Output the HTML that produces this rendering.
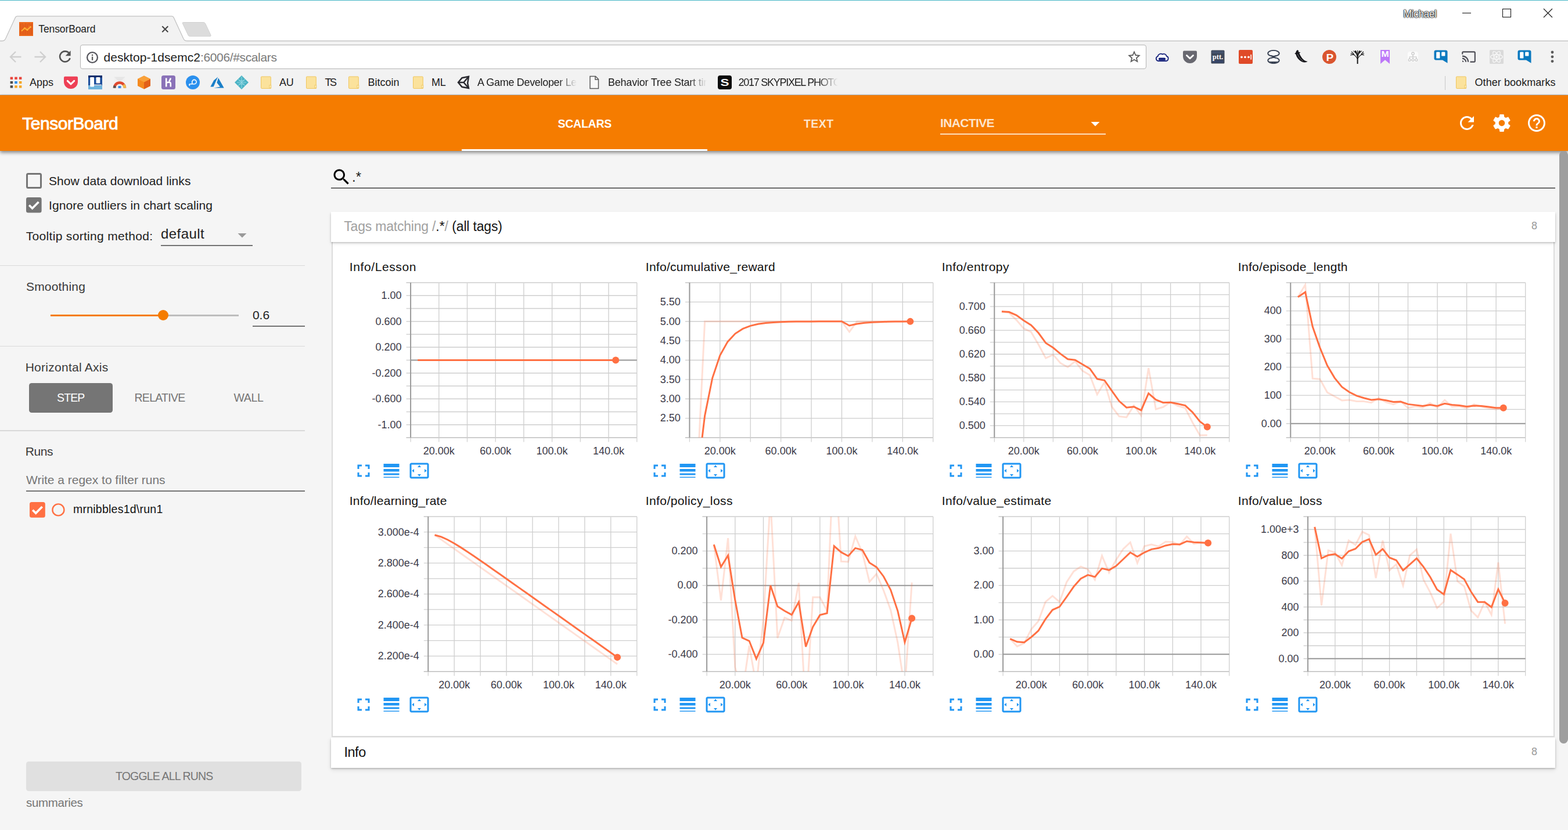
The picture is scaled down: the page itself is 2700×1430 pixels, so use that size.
<!DOCTYPE html>
<html lang="en"><head><meta charset="utf-8"><title>TensorBoard</title>
<style>
html,body{margin:0;padding:0}
body{width:2700px;height:1430px;overflow:hidden;background:#f5f5f5;position:relative;font-family:"Liberation Sans",sans-serif;}
.b{position:absolute;display:block}
.t{position:absolute;white-space:pre;display:block}
</style></head>
<body>
<div id="browser-chrome">
<div class="b" style="left:0.00px;top:0.00px;width:2700.00px;height:70.00px;background:#ffffff;"></div>
<div class="b" style="left:0.00px;top:0.00px;width:2700.00px;height:1.00px;background:#42b4c5;"></div>
<div class="b" style="left:0.00px;top:71.00px;width:2700.00px;height:93.00px;background:#f2f2f2;"></div>
<svg class="b" style="left:0;top:0" width="2700" height="72" viewBox="0 0 2700 72"><line x1="0" y1="70.5" x2="2700" y2="70.5" stroke="#b0b0b0" stroke-width="1.2"/><path d="M0 70.5 L4 70.5 C7.5 70.5 8.5 68.8 10 65.8 L26.2 30.5 C27 28.8 28 27.8 30 27.8 L295.5 27.8 C297.5 27.8 298.5 28.8 299.3 30.5 L315.5 65.8 C317 68.8 318 70.5 321.5 70.5 L326 70.5 L326 72 L0 72 Z" fill="#f2f2f2"/><path d="M0 70.5 L4 70.5 C7.5 70.5 8.5 68.8 10 65.8 L26.2 30.5 C27 28.8 28 27.8 30 27.8 L295.5 27.8 C297.5 27.8 298.5 28.8 299.3 30.5 L315.5 65.8 C317 68.8 318 70.5 321.5 70.5 L326 70.5" fill="none" stroke="#c2c2c2" stroke-width="1.3"/><path d="M315.5 38.5 L350 38.5 C352 38.5 353 39.3 353.8 41 L362.8 60 C363.6 61.8 363 62.6 361 62.6 L327.5 62.6 C325.5 62.6 324.5 61.8 323.7 60 L314.7 41 C313.9 39.3 314.1 38.5 315.5 38.5 Z" fill="#dcdcdc" stroke="#d2d2d2" stroke-width="1"/></svg>
<svg class="b" style="left:33px;top:38px" width="24" height="24" viewBox="0 0 24 24"><rect width="24" height="24" fill="#ec6a1c"/><path d="M2 3v18M5 2v20M8 4v18M11 2v7M11 14v8M14 3v6M14 15v7M17 2v4M17 12v10M20 3v19M22 2v20" stroke="#d9531a" stroke-width="1.2" fill="none"/><path d="M4.5 15 L9.5 10.5 L14 13.5 L19.5 8.5" stroke="#ffb233" stroke-width="1.8" fill="none" stroke-linejoin="round" stroke-linecap="round"/><circle cx="9.5" cy="10.5" r="1.5" fill="#ffb233"/><circle cx="14" cy="13.5" r="1.5" fill="#ffb233"/><circle cx="19.5" cy="8.5" r="1.5" fill="#ffb233"/></svg>
<span class="t" style="left:66.30px;top:41.59px;font-size:17.5px;line-height:17.5px;color:#1e1e1e;letter-spacing:-0.111px;">TensorBoard</span>
<svg class="b" style="left:277px;top:43px" width="15" height="15" viewBox="0 0 15 15"><path d="M2.3 2.3 L12.3 12.3 M12.3 2.3 L2.3 12.3" stroke="#444" stroke-width="2" fill="none"/></svg>
<span class="t" style="left:2416.50px;top:15.69px;font-size:17.5px;line-height:17.5px;color:#fff;letter-spacing:-0.471px;text-shadow:0 0 1px #000,0 0 1px #000,0 0 1.5px #111,0 0 2px #333,0 0 3px #666;">Michael</span>
<svg class="b" style="left:2500px;top:8px" width="190" height="30" viewBox="0 0 190 30"><line x1="18" y1="14.5" x2="33" y2="14.5" stroke="#1a1a1a" stroke-width="1.1"/><rect x="87.5" y="7.5" width="14" height="14" fill="none" stroke="#1a1a1a" stroke-width="1.1"/><path d="M158 7 L173 22 M173 7 L158 22" stroke="#1a1a1a" stroke-width="1.15" fill="none"/></svg>
<svg class="b" style="left:0;top:76px" width="140" height="44" viewBox="0 0 140 44"><path d="M36.5 22 L18.5 22 M27 13 L18 22 L27 31" stroke="#cfcfcf" stroke-width="2.4" fill="none"/><path d="M59.5 22 L77.5 22 M69 13 L78 22 L69 31" stroke="#cfcfcf" stroke-width="2.4" fill="none"/><path d="M118.6 15.2 A9 9 0 1 0 120.6 24.2" stroke="#545454" stroke-width="2.6" fill="none"/><path d="M121.6 11.2 L121.6 20.2 L112.6 20.2 Z" fill="#545454"/></svg>
<div class="b" style="left:137.80px;top:77.20px;width:1836.20px;height:42.10px;background:#ffffff;border:1.3px solid #b3b3b3;border-radius:4px;box-sizing:border-box;"></div>
<svg class="b" style="left:148px;top:87.6px" width="22" height="22" viewBox="0 0 22 22"><circle cx="11" cy="11" r="8.9" fill="none" stroke="#55555c" stroke-width="2.3"/><rect x="9.9" y="9.6" width="2.3" height="6.2" fill="#5a5a5a"/><rect x="9.9" y="5.8" width="2.3" height="2.3" fill="#5a5a5a"/></svg>
<span class="t" style="left:178.50px;top:88.42px;font-size:21px;line-height:21px;color:#1c1c1c;letter-spacing:0.050px;">desktop-1dsemc2</span>
<span class="t" style="left:345.00px;top:88.42px;font-size:21px;line-height:21px;color:#7a7a7a;letter-spacing:-0.362px;">:6006/#scalars</span>
<svg class="b" style="left:1940.00px;top:85.00px;" width="26" height="26" viewBox="0 0 24 24"><path d="M22 9.24l-7.19-.62L12 2 9.19 8.63 2 9.24l5.46 4.73L5.82 21 12 17.27 18.18 21l-1.63-7.03L22 9.24zM12 15.4l-3.76 2.27 1-4.28-3.32-2.88 4.38-.38L12 6.1l1.71 4.04 4.38.38-3.32 2.88 1 4.28L12 15.4z" fill="#5a5a5a"/></svg>
<div id="extensions">
<svg class="b" style="left:1989.0px;top:86.0px" width="24" height="24" viewBox="0 0 24 24"><path d="M5.5 19 H18.5 A4.3 4.3 0 0 0 19.6 10.6 A4.6 4.6 0 0 0 12.6 7.6 A5.2 5.2 0 0 0 4.6 11.2 A4 4 0 0 0 5.5 19 Z" fill="#fff" stroke="#14207a" stroke-width="1.8"/><rect x="6" y="13.6" width="12" height="4.2" rx="1.6" fill="#14207a"/></svg>
<svg class="b" style="left:2037.0px;top:86.0px" width="24" height="24" viewBox="0 0 24 24"><path d="M2 1.5 H22 Q24 1.5 24 3.5 V11 A12 12 0 0 1 0 11 V3.5 Q0 1.5 2 1.5 Z" fill="#686870"/><path d="M6.5 9.5 L12 14.8 L17.5 9.5" stroke="#fff" stroke-width="2.8" fill="none" stroke-linecap="round" stroke-linejoin="round"/></svg>
<svg class="b" style="left:2085.0px;top:86.0px" width="24" height="24" viewBox="0 0 24 24"><rect x="0.5" y="0.5" width="23" height="23" rx="1.5" fill="#3e485a"/><rect x="2" y="2" width="20" height="4" fill="#4a5a78" opacity=".6"/><rect x="3" y="18" width="18" height="4" fill="#33456e" opacity=".7"/><text x="12" y="15.6" font-family="Liberation Serif,serif" font-weight="700" font-size="12.5" fill="#fff" text-anchor="middle">ptt.</text></svg>
<svg class="b" style="left:2132.7px;top:86.0px" width="24" height="24" viewBox="0 0 24 24"><rect x="0" y="0" width="24" height="24" rx="2" fill="#e04a28"/><circle cx="5" cy="12.3" r="1.9" fill="#fff"/><circle cx="11" cy="12.3" r="1.9" fill="#fff"/><circle cx="17" cy="12.3" r="1.9" fill="#fff"/><rect x="20.4" y="8" width="1.6" height="8.6" fill="#fff"/></svg>
<svg class="b" style="left:2181.0px;top:86.0px" width="24" height="24" viewBox="0 0 24 24"><ellipse cx="12" cy="5.9" rx="9.7" ry="5" fill="#fbfbfb" stroke="#363f50" stroke-width="1.9"/><ellipse cx="12" cy="18.1" rx="9.7" ry="5" fill="#fbfbfb" stroke="#363f50" stroke-width="1.9"/><path d="M8 9.8 L16 14.2 M16 9.8 L8 14.2" stroke="#363f50" stroke-width="1.8" fill="none"/><path d="M3.4 19.4 Q12 25 20.6 19.4 Q12 20.6 3.4 19.4Z" fill="#363f50"/></svg>
<svg class="b" style="left:2228.0px;top:86.0px" width="24" height="24" viewBox="0 0 24 24"><path d="M6.2 0 L8.6 2 L7 3 L11.6 4.4 L9.3 5.6 C10.8 9.5 13 13.6 16.6 16.8 C18.6 18.6 20.8 19.6 23.6 19.8 C21.5 22 17 22 13.4 20.2 C8.2 17.5 4.5 12.5 3.3 7.6 L1.2 6.3 L3.3 4.8 C3.3 3 4.4 1.2 6.2 0 Z" fill="#15151a"/><path d="M6.3 7 C8 11.8 10.8 16 15.8 19.2" stroke="#f2f2f2" stroke-width="0.8" fill="none" opacity=".55"/></svg>
<svg class="b" style="left:2277.0px;top:86.0px" width="24" height="24" viewBox="0 0 24 24"><circle cx="12" cy="12" r="12" fill="#da552f"/><text x="0" y="0" font-family="Liberation Sans,sans-serif" font-weight="700" font-size="15.6" fill="#fff" text-anchor="middle" transform="translate(12.9 18.5) scale(1.22 1)">P</text></svg>
<svg class="b" style="left:2325.0px;top:86.0px" width="24" height="24" viewBox="0 0 24 24"><path d="M12.6 24 V12.5" stroke="#111" stroke-width="1.9" fill="none"/><path d="M12.6 15.5 C10 11 7 8 3 6.5 M12.6 15.5 C15 11 18 8 22.5 6.5 M12.6 13 C11.5 8 10 4.5 8 1.5 M12.6 13 C13.8 8 15.5 4.5 17.5 1.5 M12.6 12 V0.8 M8 9 C5.5 8 3 8 0.3 9.3 M17.5 9 C20 8 22 8 24 9.3 M6.5 7.4 C5 5.5 3.8 4 2 3 M19 7.4 C20.5 5.5 21.5 4 23 3 M10.6 6.5 C9 4.5 7.5 3 5.5 1.6 M14.8 6.5 C16.4 4.5 18 3 20 1.6 M4.2 6.9 L0.8 6 M21.3 6.9 L24 6 M11.6 8 L10.3 2.5 M13.7 8 L15 2.5 M9.3 5 L9.5 1 M16 5 L15.8 1" stroke="#111" stroke-width="1.1" fill="none"/></svg>
<svg class="b" style="left:2373.0px;top:86.0px" width="24" height="24" viewBox="0 0 24 24"><path d="M4.1 0 H20 V24 L12 17.3 L4.1 24 Z" fill="#bd78f8"/><text x="0" y="0" font-family="Liberation Sans,sans-serif" font-weight="700" font-size="14.4" fill="#fff" text-anchor="middle" transform="translate(12.05 12.3) scale(1.1 1)">M</text></svg>
<svg class="b" style="left:2421.0px;top:86.0px" width="24" height="24" viewBox="0 0 24 24"><rect x="3" y="3" width="18" height="18" rx="4" fill="#fbfbfb"/><g stroke="#c4c4c4" stroke-width="1.1" fill="none"><circle cx="12" cy="6.3" r="2.2"/><circle cx="6.2" cy="17.3" r="2"/><circle cx="12" cy="17.3" r="2"/><circle cx="17.8" cy="17.3" r="2"/><path d="M12 8.5 V15.3 M6.2 15.3 V12 H17.8 V15.3"/></g></svg>
<svg class="b" style="left:2469.0px;top:86.0px" width="24" height="24" viewBox="0 0 24 24"><path d="M3.5 0.5 H20.5 Q23.5 0.5 23.5 3.5 V22.8 L15 17.5 H3.5 Q0.5 17.5 0.5 14.5 V3.5 Q0.5 0.5 3.5 0.5 Z" fill="#0b79bf"/><rect x="4.2" y="3.6" width="6.2" height="11" rx="1.2" fill="#fff"/><rect x="13.2" y="3.6" width="6.2" height="7" rx="1.2" fill="#fff"/></svg>
<svg class="b" style="left:2517.0px;top:86.0px" width="24" height="24" viewBox="0 0 24 24"><path d="M1.2 7.5 V5 Q1.2 3.4 2.8 3.4 H21.2 Q22.8 3.4 22.8 5 V19 Q22.8 20.6 21.2 20.6 H14.5" fill="none" stroke="#4c4c54" stroke-width="2.1"/><path d="M1 20.8 V18.3 A2.5 2.5 0 0 1 3.5 20.8 Z" fill="#4c4c54"/><path d="M1 14.6 A6.2 6.2 0 0 1 7.2 20.8 M1 10.6 A10.2 10.2 0 0 1 11.2 20.8" fill="none" stroke="#4c4c54" stroke-width="2.1"/></svg>
<svg class="b" style="left:2565.0px;top:86.0px" width="24" height="24" viewBox="0 0 24 24"><rect width="24" height="24" rx="1.5" fill="#dadada"/><g stroke="#f7f7f7" stroke-width="1.3" fill="none"><ellipse cx="12" cy="12" rx="10.5" ry="4"/><ellipse cx="12" cy="12" rx="10.5" ry="4" transform="rotate(60 12 12)"/><ellipse cx="12" cy="12" rx="10.5" ry="4" transform="rotate(120 12 12)"/></g><circle cx="12" cy="12" r="2" fill="#f7f7f7"/></svg>
<svg class="b" style="left:2613.0px;top:86.0px" width="24" height="24" viewBox="0 0 24 24"><path d="M3.5 0.5 H20.5 Q23.5 0.5 23.5 3.5 V22.8 L15 17.5 H3.5 Q0.5 17.5 0.5 14.5 V3.5 Q0.5 0.5 3.5 0.5 Z" fill="#0b79bf"/><rect x="4.2" y="3.6" width="6.2" height="11" rx="1.2" fill="#fff"/><rect x="13.2" y="3.6" width="6.2" height="7" rx="1.2" fill="#fff"/></svg>
<svg class="b" style="left:2667px;top:84px" width="12" height="28" viewBox="0 0 12 28"><circle cx="6" cy="6" r="2.4" fill="#5a5a5a"/><circle cx="6" cy="13.8" r="2.4" fill="#5a5a5a"/><circle cx="6" cy="21.6" r="2.4" fill="#5a5a5a"/></svg>
</div>
<nav id="bookmarks-bar">
<svg class="b" style="left:16.5px;top:131.5px" width="21" height="20" viewBox="0 0 21 20"><rect x="0.6" y="0.6" width="4.6" height="4.3" fill="#e8453c"/><rect x="8.2" y="0.6" width="4.6" height="4.3" fill="#e8453c"/><rect x="15.8" y="0.6" width="4.6" height="4.3" fill="#e8453c"/><rect x="0.6" y="7.9" width="4.6" height="4.3" fill="#4d4d4d"/><rect x="8.2" y="7.9" width="4.6" height="4.3" fill="#2d8fe8"/><rect x="15.8" y="7.9" width="4.6" height="4.3" fill="#f5a623"/><rect x="0.6" y="15.2" width="4.6" height="4.3" fill="#4d4d4d"/><rect x="8.2" y="15.2" width="4.6" height="4.3" fill="#f5a623"/><rect x="15.8" y="15.2" width="4.6" height="4.3" fill="#f5a623"/></svg>
<span class="t" style="left:51.00px;top:133.06px;font-size:18px;line-height:18px;color:#1c1c1c;letter-spacing:-0.006px;">Apps</span>
<svg class="b" style="left:110.0px;top:129.8px" width="24" height="24" viewBox="0 0 24 24"><path d="M2 1.8 H22 Q24 1.8 24 3.8 V11 A12 12 0 0 1 0 11 V3.8 Q0 1.8 2 1.8 Z" fill="#ee4056"/><path d="M6.3 9.3 L12 14.8 L17.7 9.3" stroke="#fff" stroke-width="3" fill="none" stroke-linecap="round" stroke-linejoin="round"/></svg>
<svg class="b" style="left:152.0px;top:129.8px" width="24" height="24" viewBox="0 0 24 24"><rect width="24" height="24" rx="2" fill="#1e4f9c"/><rect x="0" y="17" width="24" height="7" fill="#6fb3dc"/><rect x="0" y="0" width="24" height="4" fill="#16306e"/><rect x="3.2" y="3" width="6.8" height="16.5" rx="1.2" fill="#fff"/><rect x="13.5" y="3" width="6.8" height="10.5" rx="1.2" fill="#fff"/><rect x="10" y="15.5" width="13" height="1.6" fill="#d8d8e0"/></svg>
<svg class="b" style="left:193.6px;top:129.8px" width="24" height="24" viewBox="0 0 24 24"><rect x="2.5" y="2.5" width="19" height="19" fill="#f0f0f0"/><path d="M2.5 2.5 L12 12 L21.5 2.5" fill="#e6e6e6"/><path d="M3 21.5 A9 9 0 0 1 21 21.5" stroke="#e04a2f" stroke-width="4.6" fill="none"/><path d="M18.6 16 A9 9 0 0 1 21 21.5" stroke="#eebb4d" stroke-width="4.6" fill="none"/><path d="M3 21.5 A9 9 0 0 1 4 18" stroke="#555" stroke-width="4.6" fill="none"/><rect x="9.5" y="18" width="5" height="4" fill="#3a8ee6"/></svg>
<svg class="b" style="left:236.0px;top:129.8px" width="24" height="24" viewBox="0 0 24 24"><path d="M12 0.5 L23 6 V18 L12 23.5 L1 18 V6 Z" fill="#f58a1f"/><path d="M12 11.5 L23 6 V18 L12 23.5 Z" fill="#e2601a"/><path d="M12 0.5 L23 6 L12 11.5 L1 6 Z" fill="#f9a13a"/></svg>
<svg class="b" style="left:278.0px;top:129.8px" width="24" height="24" viewBox="0 0 24 24"><rect width="24" height="24" rx="3.5" fill="#8a72b8"/><path d="M8.2 4.5 V19.5 M8.2 13 C11 11 15.8 11 15.8 14 V19.5 M15.8 4.5 C15.5 7 14.5 8.5 13 9.8" stroke="#fff" stroke-width="2.6" fill="none"/></svg>
<svg class="b" style="left:320.0px;top:129.8px" width="24" height="24" viewBox="0 0 24 24"><circle cx="12" cy="12" r="12" fill="#2b90ee"/><path d="M7.2 17.4 C5.4 17.4 5.4 14.8 7.2 14.8 H14.5 A3.7 3.7 0 1 0 10.8 11.1 V14.8" stroke="#fff" stroke-width="1.6" fill="none"/></svg>
<svg class="b" style="left:361.9px;top:129.8px" width="24" height="24" viewBox="0 0 24 24"><path d="M13.2 2.5 L6.2 8.6 L0.3 19.4 H5.6 Z" fill="#1a7fc8"/><path d="M14 4.2 L23.7 21.5 H6.2 L17 19.5 L11.4 12.6 Z" fill="#1a7fc8"/></svg>
<svg class="b" style="left:403.7px;top:129.8px" width="24" height="24" viewBox="0 0 24 24"><path d="M12 0 L24 12 L12 24 L0 12 Z" fill="#4bb3c4"/><path d="M4 12 H20 M12 2 V22 M6 6 L18 18 M18 6 L6 18 M7 9 L17 9 M7 15 L17 15" stroke="#9fdde6" stroke-width="0.9" fill="none"/></svg>
<svg class="b" style="left:445.5px;top:129.8px" width="24" height="24" viewBox="0 0 24 24"><path d="M4.6 2 H19.2 Q20.3 2 20.3 3.1 V22.4 H4.6 Q3.5 22.4 3.5 21.3 V3.1 Q3.5 2 4.6 2 Z" fill="#fbe29c" stroke="#efc65f" stroke-width="1"/><rect x="18" y="16.8" width="2.8" height="4.4" fill="#fdf0c4" stroke="#efc65f" stroke-width="0.9"/></svg>
<span class="t" style="left:481.00px;top:133.06px;font-size:18px;line-height:18px;color:#1c1c1c;letter-spacing:-0.253px;">AU</span>
<svg class="b" style="left:524.0px;top:129.8px" width="24" height="24" viewBox="0 0 24 24"><path d="M4.6 2 H19.2 Q20.3 2 20.3 3.1 V22.4 H4.6 Q3.5 22.4 3.5 21.3 V3.1 Q3.5 2 4.6 2 Z" fill="#fbe29c" stroke="#efc65f" stroke-width="1"/><rect x="18" y="16.8" width="2.8" height="4.4" fill="#fdf0c4" stroke="#efc65f" stroke-width="0.9"/></svg>
<span class="t" style="left:559.50px;top:133.06px;font-size:18px;line-height:18px;color:#1c1c1c;letter-spacing:-2.600px;">TS</span>
<svg class="b" style="left:597.0px;top:129.8px" width="24" height="24" viewBox="0 0 24 24"><path d="M4.6 2 H19.2 Q20.3 2 20.3 3.1 V22.4 H4.6 Q3.5 22.4 3.5 21.3 V3.1 Q3.5 2 4.6 2 Z" fill="#fbe29c" stroke="#efc65f" stroke-width="1"/><rect x="18" y="16.8" width="2.8" height="4.4" fill="#fdf0c4" stroke="#efc65f" stroke-width="0.9"/></svg>
<span class="t" style="left:633.50px;top:133.06px;font-size:18px;line-height:18px;color:#1c1c1c;letter-spacing:-0.004px;">Bitcoin</span>
<svg class="b" style="left:707.5px;top:129.8px" width="24" height="24" viewBox="0 0 24 24"><path d="M4.6 2 H19.2 Q20.3 2 20.3 3.1 V22.4 H4.6 Q3.5 22.4 3.5 21.3 V3.1 Q3.5 2 4.6 2 Z" fill="#fbe29c" stroke="#efc65f" stroke-width="1"/><rect x="18" y="16.8" width="2.8" height="4.4" fill="#fdf0c4" stroke="#efc65f" stroke-width="0.9"/></svg>
<span class="t" style="left:743.00px;top:133.06px;font-size:18px;line-height:18px;color:#1c1c1c;letter-spacing:-0.252px;">ML</span>
<svg class="b" style="left:786.0px;top:129.8px" width="24" height="24" viewBox="0 0 24 24"><path d="M3 12 L9.5 4.2 L21 1.8 L19.2 13.4 L21 22 L9.5 19.8 Z" fill="none" stroke="#2a2a30" stroke-width="2.5" stroke-linejoin="miter"/><path d="M3 12 H12.5 M12.5 12 L21 1.8 M12.5 12 L21 22" stroke="#2a2a30" stroke-width="2.5" fill="none"/></svg>
<span class="t" style="left:822.00px;top:133.06px;font-size:18px;line-height:18px;color:#1c1c1c;letter-spacing:-0.320px;-webkit-mask-image:linear-gradient(90deg,#000 82%,transparent 100%);mask-image:linear-gradient(90deg,#000 82%,transparent 100%);">A Game Developer Le</span>
<svg class="b" style="left:1011.0px;top:129.8px" width="24" height="24" viewBox="0 0 24 24"><path d="M5 1.5 H14.5 L19.5 6.5 V22.5 H5 Z" fill="#f8f8f8" stroke="#5a5a5a" stroke-width="1.5"/><path d="M14 1.8 V7 H19.2" fill="none" stroke="#555" stroke-width="1.5"/></svg>
<span class="t" style="left:1047.00px;top:133.06px;font-size:18px;line-height:18px;color:#1c1c1c;letter-spacing:-0.220px;-webkit-mask-image:linear-gradient(90deg,#000 82%,transparent 100%);mask-image:linear-gradient(90deg,#000 82%,transparent 100%);">Behavior Tree Start tir</span>
<svg class="b" style="left:1236.0px;top:129.8px" width="24" height="24" viewBox="0 0 24 24"><rect width="24" height="24" rx="4" fill="#0c0c0c"/><text x="12" y="18.6" font-family="Liberation Sans,sans-serif" font-weight="700" font-size="18" fill="#fff" text-anchor="middle" transform="translate(12 12) scale(1.25 0.92) translate(-12 -12)">S</text></svg>
<span class="t" style="left:1271.50px;top:133.06px;font-size:18px;line-height:18px;color:#1c1c1c;letter-spacing:-1.268px;-webkit-mask-image:linear-gradient(90deg,#000 78%,transparent 97%);mask-image:linear-gradient(90deg,#000 78%,transparent 97%);">2017 SKYPIXEL PHOTO</span>
<div class="b" style="left:2488.00px;top:130.50px;width:1.30px;height:24.00px;background:#c9c9c9;"></div>
<svg class="b" style="left:2503.5px;top:129.8px" width="24" height="24" viewBox="0 0 24 24"><path d="M4.6 2 H19.2 Q20.3 2 20.3 3.1 V22.4 H4.6 Q3.5 22.4 3.5 21.3 V3.1 Q3.5 2 4.6 2 Z" fill="#fbe29c" stroke="#efc65f" stroke-width="1"/><rect x="18" y="16.8" width="2.8" height="4.4" fill="#fdf0c4" stroke="#efc65f" stroke-width="0.9"/></svg>
<span class="t" style="left:2539.50px;top:133.06px;font-size:18px;line-height:18px;color:#1c1c1c;letter-spacing:0.064px;">Other bookmarks</span>
<div class="b" style="left:0.00px;top:162.60px;width:2700.00px;height:1.50px;background:#b6b6b6;"></div>
</nav>
</div>
<header id="tb-header">
<div class="b" style="left:0.00px;top:164.00px;width:2700.00px;height:96.00px;background:#f57c00;box-shadow:0 3px 6px rgba(0,0,0,.45);z-index:5;"></div>
<span class="t" style="left:38.30px;top:197.80px;font-size:30px;line-height:30px;color:#fff;letter-spacing:-0.462px;z-index:6;-webkit-text-stroke:0.9px #fff;">TensorBoard</span>
<span class="t" style="left:960.50px;top:203.79px;font-size:19.5px;line-height:19.5px;color:#fff;font-weight:700;letter-spacing:-0.251px;z-index:6;">SCALARS</span>
<div class="b" style="left:795.00px;top:257.00px;width:423.30px;height:3.00px;background:#fff;z-index:6;"></div>
<span class="t" style="left:1384.00px;top:203.79px;font-size:19.5px;line-height:19.5px;color:#fde5cc;font-weight:700;letter-spacing:0.416px;z-index:6;">TEXT</span>
<span class="t" style="left:1619.00px;top:201.32px;font-size:21px;line-height:21px;color:#fde5cc;font-weight:700;letter-spacing:-0.626px;z-index:6;">INACTIVE</span>
<svg class="b" style="left:1868.00px;top:194.50px;z-index:6;" width="36" height="36" viewBox="0 0 24 24"><path d="M7 10l5 5 5-5z" fill="#fff"/></svg>
<div class="b" style="left:1618.80px;top:230.20px;width:285.20px;height:1.70px;background:#fde0bf;z-index:6;"></div>
<svg class="b" style="left:2508.00px;top:194.00px;z-index:6;" width="36" height="36" viewBox="0 0 24 24"><path d="M17.65 6.35C16.2 4.9 14.21 4 12 4c-4.42 0-7.99 3.58-7.99 8s3.57 8 7.99 8c3.73 0 6.84-2.55 7.73-6h-2.08c-.82 2.33-3.04 4-5.65 4-3.31 0-6-2.69-6-6s2.69-6 6-6c1.66 0 3.14.69 4.22 1.78L13 11h7V4l-2.35 2.35z" fill="#fff"/></svg>
<svg class="b" style="left:2568.00px;top:194.00px;z-index:6;" width="36" height="36" viewBox="0 0 24 24"><path d="M19.43 12.98c.04-.32.07-.64.07-.98s-.03-.66-.07-.98l2.11-1.65c.19-.15.24-.42.12-.64l-2-3.46c-.12-.22-.39-.3-.61-.22l-2.49 1c-.52-.4-1.08-.73-1.69-.98l-.38-2.65C14.46 2.18 14.25 2 14 2h-4c-.25 0-.46.18-.49.42l-.38 2.65c-.61.25-1.17.59-1.69.98l-2.49-1c-.23-.09-.49 0-.61.22l-2 3.46c-.13.22-.07.49.12.64l2.11 1.65c-.04.32-.07.65-.07.98s.03.66.07.98l-2.11 1.65c-.19.15-.24.42-.12.64l2 3.46c.12.22.39.3.61.22l2.49-1c.52.4 1.08.73 1.69.98l.38 2.65c.03.24.24.42.49.42h4c.25 0 .46-.18.49-.42l.38-2.65c.61-.25 1.17-.59 1.69-.98l2.49 1c.23.09.49 0 .61-.22l2-3.46c.12-.22.07-.49-.12-.64l-2.11-1.65zM12 15.5c-1.93 0-3.5-1.57-3.5-3.5s1.57-3.5 3.5-3.5 3.5 1.57 3.5 3.5-1.57 3.5-3.5 3.5z" fill="#fff"/></svg>
<svg class="b" style="left:2628.00px;top:194.00px;z-index:6;" width="36" height="36" viewBox="0 0 24 24"><path d="M11 18h2v-2h-2v2zm1-16C6.48 2 2 6.48 2 12s4.48 10 10 10 10-4.48 10-10S17.52 2 12 2zm0 18c-4.41 0-8-3.59-8-8s3.59-8 8-8 8 3.59 8 8-3.59 8-8 8zm0-14c-2.21 0-4 1.79-4 4h2c0-1.1.9-2 2-2s2 .9 2 2c0 2-3 1.75-3 5h2c0-2.25 3-2.5 3-5 0-2.21-1.79-4-4-4z" fill="#fff"/></svg>
</header>
<aside id="tb-sidebar">
<div class="b" style="left:45.30px;top:298.20px;width:26.60px;height:26.60px;border:3px solid #757575;border-radius:3.5px;box-sizing:border-box;"></div>
<span class="t" style="left:84.00px;top:300.92px;font-size:21px;line-height:21px;color:#212121;letter-spacing:0.070px;">Show data download links</span>
<svg class="b" style="left:45.3px;top:340.2px" width="26.6" height="26.6" viewBox="0 0 26.6 26.6"><rect width="26.6" height="26.6" rx="3.5" fill="#757575"/><path d="M5.2 13.6 L10.6 19 L21.5 8" stroke="#fff" stroke-width="3.6" fill="none"/></svg>
<span class="t" style="left:84.00px;top:343.22px;font-size:21px;line-height:21px;color:#212121;letter-spacing:0.095px;">Ignore outliers in chart scaling</span>
<span class="t" style="left:44.80px;top:396.02px;font-size:21px;line-height:21px;color:#212121;letter-spacing:0.314px;">Tooltip sorting method:</span>
<span class="t" style="left:277.00px;top:391.28px;font-size:24px;line-height:24px;color:#212121;letter-spacing:0.421px;">default</span>
<svg class="b" style="left:398.80px;top:386.50px;" width="36" height="36" viewBox="0 0 24 24"><path d="M7 10l5 5 5-5z" fill="#9a9a9a"/></svg>
<div class="b" style="left:277.00px;top:422.20px;width:158.00px;height:1.60px;background:#737373;"></div>
<div class="b" style="left:0.00px;top:456.50px;width:525.00px;height:1.50px;background:#d9d9d9;"></div>
<span class="t" style="left:45.00px;top:482.82px;font-size:21px;line-height:21px;color:#3a3a3a;letter-spacing:0.179px;">Smoothing</span>
<div class="b" style="left:87.00px;top:542.00px;width:324.00px;height:3.00px;background:#bdbdbd;"></div>
<div class="b" style="left:87.00px;top:542.00px;width:194.00px;height:3.00px;background:#f57c00;"></div>
<div class="b" style="left:272.00px;top:534.40px;width:18.00px;height:18.00px;background:#f57c00;border-radius:50%;"></div>
<span class="t" style="left:435.00px;top:531.62px;font-size:21px;line-height:21px;color:#212121;letter-spacing:-0.063px;">0.6</span>
<div class="b" style="left:435.00px;top:561.00px;width:90.00px;height:1.60px;background:#737373;"></div>
<div class="b" style="left:0.00px;top:595.80px;width:525.00px;height:1.50px;background:#d9d9d9;"></div>
<span class="t" style="left:43.70px;top:621.82px;font-size:21px;line-height:21px;color:#3a3a3a;letter-spacing:0.261px;">Horizontal Axis</span>
<div class="b" style="left:50.00px;top:660.20px;width:144.00px;height:50.60px;background:#757575;border-radius:4.5px;"></div>
<span class="t" style="left:98.00px;top:675.89px;font-size:19.5px;line-height:19.5px;color:#fff;letter-spacing:-0.858px;">STEP</span>
<span class="t" style="left:231.50px;top:675.89px;font-size:19.5px;line-height:19.5px;color:#757575;letter-spacing:-0.729px;">RELATIVE</span>
<span class="t" style="left:402.50px;top:675.89px;font-size:19.5px;line-height:19.5px;color:#757575;letter-spacing:-0.345px;">WALL</span>
<div class="b" style="left:0.00px;top:741.00px;width:525.00px;height:1.50px;background:#d9d9d9;"></div>
<span class="t" style="left:43.70px;top:766.82px;font-size:21px;line-height:21px;color:#3a3a3a;letter-spacing:-0.380px;">Runs</span>
<span class="t" style="left:45.00px;top:815.72px;font-size:21px;line-height:21px;color:#757575;letter-spacing:-0.018px;">Write a regex to filter runs</span>
<div class="b" style="left:45.30px;top:845.00px;width:479.50px;height:2.00px;background:#737373;"></div>
<svg class="b" style="left:51px;top:865.1px" width="26.8" height="26.8" viewBox="0 0 26.6 26.6"><rect width="26.6" height="26.6" rx="3.5" fill="#ff7043"/><path d="M5.2 13.6 L10.6 19 L21.5 8" stroke="#fff" stroke-width="3.6" fill="none"/></svg>
<svg class="b" style="left:88px;top:866px" width="25" height="25" viewBox="0 0 25 25"><circle cx="12.4" cy="12.4" r="10" fill="none" stroke="#ff7043" stroke-width="2.4"/></svg>
<span class="t" style="left:126.00px;top:868.09px;font-size:19.5px;line-height:19.5px;color:#111;letter-spacing:0.240px;">mrnibbles1d\run1</span>
<div class="b" style="left:44.80px;top:1312.00px;width:474.20px;height:50.80px;background:#e0e0e0;border-radius:4.5px;"></div>
<span class="t" style="left:199.00px;top:1328.09px;font-size:19.5px;line-height:19.5px;color:#757575;letter-spacing:-0.826px;">TOGGLE ALL RUNS</span>
<span class="t" style="left:45.00px;top:1372.95px;font-size:20.5px;line-height:20.5px;color:#757575;letter-spacing:-0.304px;">summaries</span>
</aside>
<main id="tb-main">
<svg class="b" style="left:570.00px;top:287.00px;" width="36" height="36" viewBox="0 0 24 24"><path d="M15.5 14h-.79l-.28-.27C15.41 12.59 16 11.11 16 9.5 16 5.91 13.09 3 9.5 3S3 5.91 3 9.5 5.91 16 9.5 16c1.61 0 3.09-.59 4.23-1.57l.27.28v.79l5 4.99L20.49 19l-4.99-5zm-6 0C7.01 14 5 11.99 5 9.5S7.01 5 9.5 5 14 7.01 14 9.5 11.99 14 9.5 14z" fill="#000"/></svg>
<span class="t" style="left:606.00px;top:292.98px;font-size:24px;line-height:24px;color:#212121;">.*</span>
<div class="b" style="left:570.00px;top:322.80px;width:2108.00px;height:2.00px;background:#6a6a6a;"></div>
<div class="b" style="left:571.00px;top:416.00px;width:2106.30px;height:853.50px;background:#fff;border:2px solid #dcdcdc;border-top:none;box-sizing:border-box;"></div>
<div class="b" style="left:570.00px;top:365.00px;width:2108.00px;height:51.80px;background:#fff;box-shadow:0 1.5px 3px rgba(0,0,0,.22),0 3px 7px rgba(0,0,0,.07);"></div>
<span class="t" style="left:592.30px;top:379.33px;font-size:23px;line-height:23px;color:#a1a1a1;letter-spacing:-0.205px;">Tags matching /</span>
<span class="t" style="left:750.30px;top:379.33px;font-size:23px;line-height:23px;color:#111;">.*</span>
<span class="t" style="left:765.60px;top:379.33px;font-size:23px;line-height:23px;color:#a1a1a1;">/</span>
<span class="t" style="left:778.30px;top:379.33px;font-size:23px;line-height:23px;color:#151515;letter-spacing:-0.169px;">(all tags)</span>
<span class="t" style="left:2637.00px;top:379.96px;font-size:18px;line-height:18px;color:#9a9a9a;">8</span>
<div class="b" style="left:570.00px;top:1271.00px;width:2108.00px;height:51.80px;background:#fff;box-shadow:0 1.5px 3px rgba(0,0,0,.24),0 3px 8px rgba(0,0,0,.1);"></div>
<span class="t" style="left:592.50px;top:1285.41px;font-size:23.5px;line-height:23.5px;color:#111;letter-spacing:-0.498px;">Info</span>
<span class="t" style="left:2637.00px;top:1285.76px;font-size:18px;line-height:18px;color:#9a9a9a;">8</span>
<span class="t" style="left:601.80px;top:448.82px;font-size:21px;line-height:21px;color:#111;letter-spacing:0.597px;">Info/Lesson</span>
<svg class="b" style="left:608.00px;top:793.00px;" width="36" height="36" viewBox="0 0 24 24"><path d="M7 14H5v5h5v-2H7v-3zm-2-4h2V7h3V5H5v5zm12 7h-3v2h5v-5h-2v3zM14 5v2h3v3h2V5h-5z" fill="#2196f3"/></svg>
<svg class="b" style="left:656.00px;top:793.00px;" width="36" height="36" viewBox="0 0 24 24"><path d="M3 17h18v-2H3v2zm0 3h18v-1H3v1zm0-7h18v-3H3v3zm0-9v4h18V4H3z" fill="#2196f3"/></svg>
<svg class="b" style="left:704.00px;top:793.00px;" width="36" height="36" viewBox="0 0 24 24"><path d="M12.01 5.5L10 8h4l-1.99-2.5zM18 10v4l2.5-1.99L18 10zM6 10l-2.5 2.01L6 14v-4zm8 6h-4l2.01 2.5L14 16zm7-13H3c-1.1 0-2 .9-2 2v14c0 1.1.9 2 2 2h18c1.1 0 2-.9 2-2V5c0-1.1-.9-2-2-2zm0 16.01H3V4.99h18v14.02z" fill="#2196f3"/></svg>
<span class="t" style="left:1111.80px;top:448.82px;font-size:21px;line-height:21px;color:#111;letter-spacing:0.279px;">Info/cumulative_reward</span>
<svg class="b" style="left:1118.00px;top:793.00px;" width="36" height="36" viewBox="0 0 24 24"><path d="M7 14H5v5h5v-2H7v-3zm-2-4h2V7h3V5H5v5zm12 7h-3v2h5v-5h-2v3zM14 5v2h3v3h2V5h-5z" fill="#2196f3"/></svg>
<svg class="b" style="left:1166.00px;top:793.00px;" width="36" height="36" viewBox="0 0 24 24"><path d="M3 17h18v-2H3v2zm0 3h18v-1H3v1zm0-7h18v-3H3v3zm0-9v4h18V4H3z" fill="#2196f3"/></svg>
<svg class="b" style="left:1214.00px;top:793.00px;" width="36" height="36" viewBox="0 0 24 24"><path d="M12.01 5.5L10 8h4l-1.99-2.5zM18 10v4l2.5-1.99L18 10zM6 10l-2.5 2.01L6 14v-4zm8 6h-4l2.01 2.5L14 16zm7-13H3c-1.1 0-2 .9-2 2v14c0 1.1.9 2 2 2h18c1.1 0 2-.9 2-2V5c0-1.1-.9-2-2-2zm0 16.01H3V4.99h18v14.02z" fill="#2196f3"/></svg>
<span class="t" style="left:1621.80px;top:448.82px;font-size:21px;line-height:21px;color:#111;letter-spacing:0.428px;">Info/entropy</span>
<svg class="b" style="left:1628.00px;top:793.00px;" width="36" height="36" viewBox="0 0 24 24"><path d="M7 14H5v5h5v-2H7v-3zm-2-4h2V7h3V5H5v5zm12 7h-3v2h5v-5h-2v3zM14 5v2h3v3h2V5h-5z" fill="#2196f3"/></svg>
<svg class="b" style="left:1676.00px;top:793.00px;" width="36" height="36" viewBox="0 0 24 24"><path d="M3 17h18v-2H3v2zm0 3h18v-1H3v1zm0-7h18v-3H3v3zm0-9v4h18V4H3z" fill="#2196f3"/></svg>
<svg class="b" style="left:1724.00px;top:793.00px;" width="36" height="36" viewBox="0 0 24 24"><path d="M12.01 5.5L10 8h4l-1.99-2.5zM18 10v4l2.5-1.99L18 10zM6 10l-2.5 2.01L6 14v-4zm8 6h-4l2.01 2.5L14 16zm7-13H3c-1.1 0-2 .9-2 2v14c0 1.1.9 2 2 2h18c1.1 0 2-.9 2-2V5c0-1.1-.9-2-2-2zm0 16.01H3V4.99h18v14.02z" fill="#2196f3"/></svg>
<span class="t" style="left:2131.80px;top:448.82px;font-size:21px;line-height:21px;color:#111;letter-spacing:0.299px;">Info/episode_length</span>
<svg class="b" style="left:2138.00px;top:793.00px;" width="36" height="36" viewBox="0 0 24 24"><path d="M7 14H5v5h5v-2H7v-3zm-2-4h2V7h3V5H5v5zm12 7h-3v2h5v-5h-2v3zM14 5v2h3v3h2V5h-5z" fill="#2196f3"/></svg>
<svg class="b" style="left:2186.00px;top:793.00px;" width="36" height="36" viewBox="0 0 24 24"><path d="M3 17h18v-2H3v2zm0 3h18v-1H3v1zm0-7h18v-3H3v3zm0-9v4h18V4H3z" fill="#2196f3"/></svg>
<svg class="b" style="left:2234.00px;top:793.00px;" width="36" height="36" viewBox="0 0 24 24"><path d="M12.01 5.5L10 8h4l-1.99-2.5zM18 10v4l2.5-1.99L18 10zM6 10l-2.5 2.01L6 14v-4zm8 6h-4l2.01 2.5L14 16zm7-13H3c-1.1 0-2 .9-2 2v14c0 1.1.9 2 2 2h18c1.1 0 2-.9 2-2V5c0-1.1-.9-2-2-2zm0 16.01H3V4.99h18v14.02z" fill="#2196f3"/></svg>
<span class="t" style="left:601.80px;top:851.82px;font-size:21px;line-height:21px;color:#111;letter-spacing:0.243px;">Info/learning_rate</span>
<svg class="b" style="left:608.00px;top:1196.00px;" width="36" height="36" viewBox="0 0 24 24"><path d="M7 14H5v5h5v-2H7v-3zm-2-4h2V7h3V5H5v5zm12 7h-3v2h5v-5h-2v3zM14 5v2h3v3h2V5h-5z" fill="#2196f3"/></svg>
<svg class="b" style="left:656.00px;top:1196.00px;" width="36" height="36" viewBox="0 0 24 24"><path d="M3 17h18v-2H3v2zm0 3h18v-1H3v1zm0-7h18v-3H3v3zm0-9v4h18V4H3z" fill="#2196f3"/></svg>
<svg class="b" style="left:704.00px;top:1196.00px;" width="36" height="36" viewBox="0 0 24 24"><path d="M12.01 5.5L10 8h4l-1.99-2.5zM18 10v4l2.5-1.99L18 10zM6 10l-2.5 2.01L6 14v-4zm8 6h-4l2.01 2.5L14 16zm7-13H3c-1.1 0-2 .9-2 2v14c0 1.1.9 2 2 2h18c1.1 0 2-.9 2-2V5c0-1.1-.9-2-2-2zm0 16.01H3V4.99h18v14.02z" fill="#2196f3"/></svg>
<span class="t" style="left:1111.80px;top:851.82px;font-size:21px;line-height:21px;color:#111;letter-spacing:0.403px;">Info/policy_loss</span>
<svg class="b" style="left:1118.00px;top:1196.00px;" width="36" height="36" viewBox="0 0 24 24"><path d="M7 14H5v5h5v-2H7v-3zm-2-4h2V7h3V5H5v5zm12 7h-3v2h5v-5h-2v3zM14 5v2h3v3h2V5h-5z" fill="#2196f3"/></svg>
<svg class="b" style="left:1166.00px;top:1196.00px;" width="36" height="36" viewBox="0 0 24 24"><path d="M3 17h18v-2H3v2zm0 3h18v-1H3v1zm0-7h18v-3H3v3zm0-9v4h18V4H3z" fill="#2196f3"/></svg>
<svg class="b" style="left:1214.00px;top:1196.00px;" width="36" height="36" viewBox="0 0 24 24"><path d="M12.01 5.5L10 8h4l-1.99-2.5zM18 10v4l2.5-1.99L18 10zM6 10l-2.5 2.01L6 14v-4zm8 6h-4l2.01 2.5L14 16zm7-13H3c-1.1 0-2 .9-2 2v14c0 1.1.9 2 2 2h18c1.1 0 2-.9 2-2V5c0-1.1-.9-2-2-2zm0 16.01H3V4.99h18v14.02z" fill="#2196f3"/></svg>
<span class="t" style="left:1621.80px;top:851.82px;font-size:21px;line-height:21px;color:#111;letter-spacing:0.344px;">Info/value_estimate</span>
<svg class="b" style="left:1628.00px;top:1196.00px;" width="36" height="36" viewBox="0 0 24 24"><path d="M7 14H5v5h5v-2H7v-3zm-2-4h2V7h3V5H5v5zm12 7h-3v2h5v-5h-2v3zM14 5v2h3v3h2V5h-5z" fill="#2196f3"/></svg>
<svg class="b" style="left:1676.00px;top:1196.00px;" width="36" height="36" viewBox="0 0 24 24"><path d="M3 17h18v-2H3v2zm0 3h18v-1H3v1zm0-7h18v-3H3v3zm0-9v4h18V4H3z" fill="#2196f3"/></svg>
<svg class="b" style="left:1724.00px;top:1196.00px;" width="36" height="36" viewBox="0 0 24 24"><path d="M12.01 5.5L10 8h4l-1.99-2.5zM18 10v4l2.5-1.99L18 10zM6 10l-2.5 2.01L6 14v-4zm8 6h-4l2.01 2.5L14 16zm7-13H3c-1.1 0-2 .9-2 2v14c0 1.1.9 2 2 2h18c1.1 0 2-.9 2-2V5c0-1.1-.9-2-2-2zm0 16.01H3V4.99h18v14.02z" fill="#2196f3"/></svg>
<span class="t" style="left:2131.80px;top:851.82px;font-size:21px;line-height:21px;color:#111;letter-spacing:0.323px;">Info/value_loss</span>
<svg class="b" style="left:2138.00px;top:1196.00px;" width="36" height="36" viewBox="0 0 24 24"><path d="M7 14H5v5h5v-2H7v-3zm-2-4h2V7h3V5H5v5zm12 7h-3v2h5v-5h-2v3zM14 5v2h3v3h2V5h-5z" fill="#2196f3"/></svg>
<svg class="b" style="left:2186.00px;top:1196.00px;" width="36" height="36" viewBox="0 0 24 24"><path d="M3 17h18v-2H3v2zm0 3h18v-1H3v1zm0-7h18v-3H3v3zm0-9v4h18V4H3z" fill="#2196f3"/></svg>
<svg class="b" style="left:2234.00px;top:1196.00px;" width="36" height="36" viewBox="0 0 24 24"><path d="M12.01 5.5L10 8h4l-1.99-2.5zM18 10v4l2.5-1.99L18 10zM6 10l-2.5 2.01L6 14v-4zm8 6h-4l2.01 2.5L14 16zm7-13H3c-1.1 0-2 .9-2 2v14c0 1.1.9 2 2 2h18c1.1 0 2-.9 2-2V5c0-1.1-.9-2-2-2zm0 16.01H3V4.99h18v14.02z" fill="#2196f3"/></svg>
<svg class="b" style="left:560px;top:420px" width="2130" height="860" viewBox="560 420 2130 860" font-family="Liberation Sans, sans-serif"><g><path d="M707.10 487.00H1096.70M707.10 509.25H1096.70M707.10 531.50H1096.70M707.10 553.75H1096.70M707.10 576.00H1096.70M707.10 598.25H1096.70M707.10 620.50H1096.70M707.10 642.75H1096.70M707.10 665.00H1096.70M707.10 687.25H1096.70M707.10 709.50H1096.70M707.10 731.75H1096.70M707.10 754.00H1096.70M707.10 487.00V754.00M755.80 487.00V754.00M804.50 487.00V754.00M853.20 487.00V754.00M901.90 487.00V754.00M950.60 487.00V754.00M999.30 487.00V754.00M1048.00 487.00V754.00M1096.70 487.00V754.00" stroke="#3c3c3c" stroke-opacity=".25" stroke-width="1.3" fill="none"/><path d="M699.60 487.00H1096.70" stroke="#d9d9d9" stroke-width="1.8" fill="none"/><path d="M699.60 487.00H707.10M699.60 509.25H707.10M699.60 531.50H707.10M699.60 553.75H707.10M699.60 576.00H707.10M699.60 598.25H707.10M699.60 620.50H707.10M699.60 642.75H707.10M699.60 665.00H707.10M699.60 687.25H707.10M699.60 709.50H707.10M699.60 731.75H707.10M699.60 754.00H707.10M707.10 754.00V761.50M755.80 754.00V761.50M804.50 754.00V761.50M853.20 754.00V761.50M901.90 754.00V761.50M950.60 754.00V761.50M999.30 754.00V761.50M1048.00 754.00V761.50M1096.70 754.00V761.50" stroke="#d2d2d2" stroke-width="1.3" fill="none"/><path d="M699.60 754.00H1096.70" stroke="#cdcdcd" stroke-width="1.9" fill="none"/><path d="M707.10 487.00V754.00" stroke="#999" stroke-width="1.95" fill="none"/><path d="M707.10 620.50H1096.70" stroke="#999" stroke-width="1.95" fill="none"/><text x="691.50" y="515.05" text-anchor="end" font-size="18" fill="#3b3a48">1.00</text><text x="691.50" y="559.55" text-anchor="end" font-size="18" fill="#3b3a48">0.600</text><text x="691.50" y="604.05" text-anchor="end" font-size="18" fill="#3b3a48">0.200</text><text x="691.50" y="648.55" text-anchor="end" font-size="18" fill="#3b3a48">-0.200</text><text x="691.50" y="693.05" text-anchor="end" font-size="18" fill="#3b3a48">-0.600</text><text x="691.50" y="737.55" text-anchor="end" font-size="18" fill="#3b3a48">-1.00</text><text x="755.80" y="782.80" text-anchor="middle" font-size="18" fill="#3b3a48">20.00k</text><text x="853.20" y="782.80" text-anchor="middle" font-size="18" fill="#3b3a48">60.00k</text><text x="950.60" y="782.80" text-anchor="middle" font-size="18" fill="#3b3a48">100.0k</text><text x="1048.00" y="782.80" text-anchor="middle" font-size="18" fill="#3b3a48">140.0k</text><clipPath id="cp0"><rect x="707.10" y="487.00" width="389.60" height="267.00"/></clipPath><path d="M719.27 620.50L731.45 620.50L743.62 620.50L755.80 620.50L767.98 620.50L780.15 620.50L792.33 620.50L804.50 620.50L816.68 620.50L828.85 620.50L841.03 620.50L853.20 620.50L865.38 620.50L877.55 620.50L889.73 620.50L901.90 620.50L914.08 620.50L926.25 620.50L938.42 620.50L950.60 620.50L962.78 620.50L974.95 620.50L987.12 620.50L999.30 620.50L1011.48 620.50L1023.65 620.50L1035.83 620.50L1048.00 620.50L1060.17 620.50" stroke="#ff7043" stroke-width="3" fill="none" stroke-linejoin="miter" clip-path="url(#cp0)"/><circle cx="1060.17" cy="620.50" r="6" fill="#ff7043"/></g><g><path d="M1187.40 487.00H1606.70M1187.40 520.38H1606.70M1187.40 553.75H1606.70M1187.40 587.12H1606.70M1187.40 620.50H1606.70M1187.40 653.88H1606.70M1187.40 687.25H1606.70M1187.40 720.62H1606.70M1187.40 754.00H1606.70M1187.40 487.00V754.00M1239.81 487.00V754.00M1292.23 487.00V754.00M1344.64 487.00V754.00M1397.05 487.00V754.00M1449.46 487.00V754.00M1501.88 487.00V754.00M1554.29 487.00V754.00M1606.70 487.00V754.00" stroke="#3c3c3c" stroke-opacity=".25" stroke-width="1.3" fill="none"/><path d="M1179.90 487.00H1606.70" stroke="#d9d9d9" stroke-width="1.8" fill="none"/><path d="M1179.90 487.00H1187.40M1179.90 520.38H1187.40M1179.90 553.75H1187.40M1179.90 587.12H1187.40M1179.90 620.50H1187.40M1179.90 653.88H1187.40M1179.90 687.25H1187.40M1179.90 720.62H1187.40M1179.90 754.00H1187.40M1187.40 754.00V761.50M1239.81 754.00V761.50M1292.23 754.00V761.50M1344.64 754.00V761.50M1397.05 754.00V761.50M1449.46 754.00V761.50M1501.88 754.00V761.50M1554.29 754.00V761.50M1606.70 754.00V761.50" stroke="#d2d2d2" stroke-width="1.3" fill="none"/><path d="M1179.90 754.00H1606.70" stroke="#cdcdcd" stroke-width="1.9" fill="none"/><path d="M1187.40 487.00V754.00" stroke="#999" stroke-width="1.95" fill="none"/><text x="1171.80" y="526.17" text-anchor="end" font-size="18" fill="#3b3a48">5.50</text><text x="1171.80" y="559.55" text-anchor="end" font-size="18" fill="#3b3a48">5.00</text><text x="1171.80" y="592.92" text-anchor="end" font-size="18" fill="#3b3a48">4.50</text><text x="1171.80" y="626.30" text-anchor="end" font-size="18" fill="#3b3a48">4.00</text><text x="1171.80" y="659.67" text-anchor="end" font-size="18" fill="#3b3a48">3.50</text><text x="1171.80" y="693.05" text-anchor="end" font-size="18" fill="#3b3a48">3.00</text><text x="1171.80" y="726.42" text-anchor="end" font-size="18" fill="#3b3a48">2.50</text><text x="1239.81" y="782.80" text-anchor="middle" font-size="18" fill="#3b3a48">20.00k</text><text x="1344.64" y="782.80" text-anchor="middle" font-size="18" fill="#3b3a48">60.00k</text><text x="1449.46" y="782.80" text-anchor="middle" font-size="18" fill="#3b3a48">100.0k</text><text x="1554.29" y="782.80" text-anchor="middle" font-size="18" fill="#3b3a48">140.0k</text><clipPath id="cp1"><rect x="1187.40" y="487.00" width="419.30" height="267.00"/></clipPath><path d="M1200.50 824.76L1213.61 553.75L1226.71 553.75L1239.81 553.75L1252.92 553.75L1266.02 553.75L1279.12 553.75L1292.23 553.75L1305.33 553.75L1318.43 553.75L1331.53 553.75L1344.64 553.75L1357.74 553.75L1370.84 553.75L1383.95 553.75L1397.05 553.75L1410.15 553.75L1423.26 553.75L1436.36 553.75L1449.46 553.75L1462.57 571.77L1475.67 553.75L1488.77 553.75L1501.88 553.75L1514.98 553.75L1528.08 553.75L1541.18 553.75L1554.29 553.75L1567.39 553.75" stroke="#ff7043" stroke-opacity=".22" stroke-width="3" fill="none" clip-path="url(#cp1)"/><path d="M1200.50 824.76L1213.61 716.35L1226.71 651.31L1239.81 612.29L1252.92 588.87L1266.02 574.82L1279.12 566.39L1292.23 561.34L1305.33 558.30L1318.43 556.48L1331.53 555.39L1344.64 554.73L1357.74 554.34L1370.84 554.10L1383.95 553.96L1397.05 553.88L1410.15 553.83L1423.26 553.80L1436.36 553.78L1449.46 553.77L1462.57 560.97L1475.67 558.08L1488.77 556.35L1501.88 555.31L1514.98 554.69L1528.08 554.31L1541.18 554.09L1554.29 553.95L1567.39 553.87" stroke="#ff7043" stroke-width="3" fill="none" stroke-linejoin="miter" clip-path="url(#cp1)"/><circle cx="1567.39" cy="553.87" r="6" fill="#ff7043"/></g><g><path d="M1712.30 487.00H2116.70M1712.30 507.54H2116.70M1712.30 528.08H2116.70M1712.30 548.62H2116.70M1712.30 569.15H2116.70M1712.30 589.69H2116.70M1712.30 610.23H2116.70M1712.30 630.77H2116.70M1712.30 651.31H2116.70M1712.30 671.85H2116.70M1712.30 692.38H2116.70M1712.30 712.92H2116.70M1712.30 733.46H2116.70M1712.30 754.00H2116.70M1712.30 487.00V754.00M1762.85 487.00V754.00M1813.40 487.00V754.00M1863.95 487.00V754.00M1914.50 487.00V754.00M1965.05 487.00V754.00M2015.60 487.00V754.00M2066.15 487.00V754.00M2116.70 487.00V754.00" stroke="#3c3c3c" stroke-opacity=".25" stroke-width="1.3" fill="none"/><path d="M1704.80 487.00H2116.70" stroke="#d9d9d9" stroke-width="1.8" fill="none"/><path d="M1704.80 487.00H1712.30M1704.80 507.54H1712.30M1704.80 528.08H1712.30M1704.80 548.62H1712.30M1704.80 569.15H1712.30M1704.80 589.69H1712.30M1704.80 610.23H1712.30M1704.80 630.77H1712.30M1704.80 651.31H1712.30M1704.80 671.85H1712.30M1704.80 692.38H1712.30M1704.80 712.92H1712.30M1704.80 733.46H1712.30M1704.80 754.00H1712.30M1712.30 754.00V761.50M1762.85 754.00V761.50M1813.40 754.00V761.50M1863.95 754.00V761.50M1914.50 754.00V761.50M1965.05 754.00V761.50M2015.60 754.00V761.50M2066.15 754.00V761.50M2116.70 754.00V761.50" stroke="#d2d2d2" stroke-width="1.3" fill="none"/><path d="M1704.80 754.00H2116.70" stroke="#cdcdcd" stroke-width="1.9" fill="none"/><path d="M1712.30 487.00V754.00" stroke="#999" stroke-width="1.95" fill="none"/><text x="1696.70" y="533.88" text-anchor="end" font-size="18" fill="#3b3a48">0.700</text><text x="1696.70" y="574.95" text-anchor="end" font-size="18" fill="#3b3a48">0.660</text><text x="1696.70" y="616.03" text-anchor="end" font-size="18" fill="#3b3a48">0.620</text><text x="1696.70" y="657.11" text-anchor="end" font-size="18" fill="#3b3a48">0.580</text><text x="1696.70" y="698.18" text-anchor="end" font-size="18" fill="#3b3a48">0.540</text><text x="1696.70" y="739.26" text-anchor="end" font-size="18" fill="#3b3a48">0.500</text><text x="1762.85" y="782.80" text-anchor="middle" font-size="18" fill="#3b3a48">20.00k</text><text x="1863.95" y="782.80" text-anchor="middle" font-size="18" fill="#3b3a48">60.00k</text><text x="1965.05" y="782.80" text-anchor="middle" font-size="18" fill="#3b3a48">100.0k</text><text x="2066.15" y="782.80" text-anchor="middle" font-size="18" fill="#3b3a48">140.0k</text><clipPath id="cp2"><rect x="1712.30" y="487.00" width="404.40" height="267.00"/></clipPath><path d="M1724.94 536.72L1737.58 538.85L1750.21 551.39L1762.85 565.96L1775.49 571.91L1788.12 593.59L1800.76 617.09L1813.40 611.13L1826.04 625.59L1838.67 632.50L1851.31 622.51L1863.95 638.88L1876.59 646.32L1889.22 679.52L1901.86 658.77L1914.50 700.70L1927.14 717.42L1939.77 718.89L1952.41 698.65L1965.05 716.01L1977.69 634.13L1990.32 705.04L2002.96 701.29L2015.60 692.84L2028.24 699.24L2040.88 703.05L2053.51 727.98L2066.15 749.97L2078.79 749.68" stroke="#ff7043" stroke-opacity=".22" stroke-width="3" fill="none" clip-path="url(#cp2)"/><path d="M1724.94 536.72L1737.58 537.57L1750.21 543.10L1762.85 552.24L1775.49 560.11L1788.12 573.50L1800.76 590.94L1813.40 599.02L1826.04 609.65L1838.67 618.79L1851.31 620.28L1863.95 627.72L1876.59 635.16L1889.22 652.90L1901.86 655.25L1914.50 673.43L1927.14 691.03L1939.77 702.17L1952.41 700.76L1965.05 706.86L1977.69 677.77L1990.32 688.68L2002.96 693.72L2015.60 693.37L2028.24 695.72L2040.88 698.65L2053.51 710.38L2066.15 726.22L2078.79 735.60" stroke="#ff7043" stroke-width="3" fill="none" stroke-linejoin="miter" clip-path="url(#cp2)"/><circle cx="2078.79" cy="735.60" r="6" fill="#ff7043"/></g><g><path d="M2222.30 487.00H2626.70M2222.30 511.27H2626.70M2222.30 535.55H2626.70M2222.30 559.82H2626.70M2222.30 584.09H2626.70M2222.30 608.36H2626.70M2222.30 632.64H2626.70M2222.30 656.91H2626.70M2222.30 681.18H2626.70M2222.30 705.45H2626.70M2222.30 729.73H2626.70M2222.30 754.00H2626.70M2222.30 487.00V754.00M2272.85 487.00V754.00M2323.40 487.00V754.00M2373.95 487.00V754.00M2424.50 487.00V754.00M2475.05 487.00V754.00M2525.60 487.00V754.00M2576.15 487.00V754.00M2626.70 487.00V754.00" stroke="#3c3c3c" stroke-opacity=".25" stroke-width="1.3" fill="none"/><path d="M2214.80 487.00H2626.70" stroke="#d9d9d9" stroke-width="1.8" fill="none"/><path d="M2214.80 487.00H2222.30M2214.80 511.27H2222.30M2214.80 535.55H2222.30M2214.80 559.82H2222.30M2214.80 584.09H2222.30M2214.80 608.36H2222.30M2214.80 632.64H2222.30M2214.80 656.91H2222.30M2214.80 681.18H2222.30M2214.80 705.45H2222.30M2214.80 729.73H2222.30M2214.80 754.00H2222.30M2222.30 754.00V761.50M2272.85 754.00V761.50M2323.40 754.00V761.50M2373.95 754.00V761.50M2424.50 754.00V761.50M2475.05 754.00V761.50M2525.60 754.00V761.50M2576.15 754.00V761.50M2626.70 754.00V761.50" stroke="#d2d2d2" stroke-width="1.3" fill="none"/><path d="M2214.80 754.00H2626.70" stroke="#cdcdcd" stroke-width="1.9" fill="none"/><path d="M2222.30 487.00V754.00" stroke="#999" stroke-width="1.95" fill="none"/><path d="M2222.30 729.73H2626.70" stroke="#999" stroke-width="1.95" fill="none"/><text x="2206.70" y="541.35" text-anchor="end" font-size="18" fill="#3b3a48">400</text><text x="2206.70" y="589.89" text-anchor="end" font-size="18" fill="#3b3a48">300</text><text x="2206.70" y="638.44" text-anchor="end" font-size="18" fill="#3b3a48">200</text><text x="2206.70" y="686.98" text-anchor="end" font-size="18" fill="#3b3a48">100</text><text x="2206.70" y="735.53" text-anchor="end" font-size="18" fill="#3b3a48">0.00</text><text x="2272.85" y="782.80" text-anchor="middle" font-size="18" fill="#3b3a48">20.00k</text><text x="2373.95" y="782.80" text-anchor="middle" font-size="18" fill="#3b3a48">60.00k</text><text x="2475.05" y="782.80" text-anchor="middle" font-size="18" fill="#3b3a48">100.0k</text><text x="2576.15" y="782.80" text-anchor="middle" font-size="18" fill="#3b3a48">140.0k</text><clipPath id="cp3"><rect x="2222.30" y="487.00" width="404.40" height="267.00"/></clipPath><path d="M2234.94 511.85L2247.58 490.59L2260.21 652.17L2272.85 653.23L2285.49 676.08L2298.12 682.99L2310.76 689.90L2323.40 688.95L2336.04 691.50L2348.68 691.50L2361.31 693.73L2373.95 685.76L2386.59 692.98L2399.22 696.70L2411.86 691.50L2424.50 702.76L2437.14 700.11L2449.78 702.13L2462.41 694.26L2475.05 702.23L2487.69 689.26L2500.32 700.64L2512.96 700.11L2525.60 703.30L2538.24 696.70L2550.88 700.53L2563.51 703.30L2576.15 705.32L2588.79 702.76" stroke="#ff7043" stroke-opacity=".22" stroke-width="3" fill="none" clip-path="url(#cp3)"/><path d="M2234.94 511.85L2247.58 503.35L2260.21 562.87L2272.85 599.02L2285.49 629.84L2298.12 651.10L2310.76 666.62L2323.40 675.55L2336.04 681.93L2348.68 685.76L2361.31 688.95L2373.95 687.67L2386.59 689.80L2399.22 692.56L2411.86 692.13L2424.50 696.39L2437.14 697.87L2449.78 699.58L2462.41 697.45L2475.05 699.36L2487.69 695.32L2500.32 697.45L2512.96 698.51L2525.60 700.43L2538.24 698.94L2550.88 699.58L2563.51 701.06L2576.15 702.76L2588.79 702.76" stroke="#ff7043" stroke-width="3" fill="none" stroke-linejoin="miter" clip-path="url(#cp3)"/><circle cx="2588.79" cy="702.76" r="6" fill="#ff7043"/></g><g><path d="M737.30 890.00H1096.70M737.30 916.70H1096.70M737.30 943.40H1096.70M737.30 970.10H1096.70M737.30 996.80H1096.70M737.30 1023.50H1096.70M737.30 1050.20H1096.70M737.30 1076.90H1096.70M737.30 1103.60H1096.70M737.30 1130.30H1096.70M737.30 1157.00H1096.70M737.30 890.00V1157.00M782.22 890.00V1157.00M827.15 890.00V1157.00M872.08 890.00V1157.00M917.00 890.00V1157.00M961.92 890.00V1157.00M1006.85 890.00V1157.00M1051.78 890.00V1157.00M1096.70 890.00V1157.00" stroke="#3c3c3c" stroke-opacity=".25" stroke-width="1.3" fill="none"/><path d="M729.80 890.00H1096.70" stroke="#d9d9d9" stroke-width="1.8" fill="none"/><path d="M729.80 890.00H737.30M729.80 916.70H737.30M729.80 943.40H737.30M729.80 970.10H737.30M729.80 996.80H737.30M729.80 1023.50H737.30M729.80 1050.20H737.30M729.80 1076.90H737.30M729.80 1103.60H737.30M729.80 1130.30H737.30M729.80 1157.00H737.30M737.30 1157.00V1164.50M782.22 1157.00V1164.50M827.15 1157.00V1164.50M872.08 1157.00V1164.50M917.00 1157.00V1164.50M961.92 1157.00V1164.50M1006.85 1157.00V1164.50M1051.78 1157.00V1164.50M1096.70 1157.00V1164.50" stroke="#d2d2d2" stroke-width="1.3" fill="none"/><path d="M729.80 1157.00H1096.70" stroke="#cdcdcd" stroke-width="1.9" fill="none"/><path d="M737.30 890.00V1157.00" stroke="#999" stroke-width="1.95" fill="none"/><text x="721.70" y="922.50" text-anchor="end" font-size="18" fill="#3b3a48">3.000e-4</text><text x="721.70" y="975.90" text-anchor="end" font-size="18" fill="#3b3a48">2.800e-4</text><text x="721.70" y="1029.30" text-anchor="end" font-size="18" fill="#3b3a48">2.600e-4</text><text x="721.70" y="1082.70" text-anchor="end" font-size="18" fill="#3b3a48">2.400e-4</text><text x="721.70" y="1136.10" text-anchor="end" font-size="18" fill="#3b3a48">2.200e-4</text><text x="782.22" y="1185.80" text-anchor="middle" font-size="18" fill="#3b3a48">20.00k</text><text x="872.08" y="1185.80" text-anchor="middle" font-size="18" fill="#3b3a48">60.00k</text><text x="961.92" y="1185.80" text-anchor="middle" font-size="18" fill="#3b3a48">100.0k</text><text x="1051.78" y="1185.80" text-anchor="middle" font-size="18" fill="#3b3a48">140.0k</text><clipPath id="cp4"><rect x="737.30" y="890.00" width="359.40" height="267.00"/></clipPath><path d="M748.53 921.70L759.76 929.65L770.99 937.60L782.22 945.55L793.46 953.50L804.69 961.45L815.92 969.40L827.15 977.35L838.38 985.30L849.61 993.25L860.84 1001.20L872.08 1009.15L883.31 1017.10L894.54 1025.05L905.77 1033.00L917.00 1040.95L928.23 1048.90L939.46 1056.85L950.69 1064.80L961.92 1072.75L973.16 1080.70L984.39 1088.65L995.62 1096.60L1006.85 1104.55L1018.08 1112.50L1029.31 1120.45L1040.54 1128.40L1051.78 1136.35L1063.01 1144.30" stroke="#ff7043" stroke-opacity=".22" stroke-width="3" fill="none" clip-path="url(#cp4)"/><path d="M748.53 921.70L759.76 924.88L770.99 929.97L782.22 936.20L793.46 943.12L804.69 950.45L815.92 958.03L827.15 965.76L838.38 973.58L849.61 981.45L860.84 989.35L872.08 997.27L883.31 1005.20L894.54 1013.14L905.77 1021.08L917.00 1029.03L928.23 1036.98L939.46 1044.93L950.69 1052.88L961.92 1060.83L973.16 1068.78L984.39 1076.73L995.62 1084.68L1006.85 1092.63L1018.08 1100.58L1029.31 1108.53L1040.54 1116.48L1051.78 1124.43L1063.01 1132.38" stroke="#ff7043" stroke-width="3" fill="none" stroke-linejoin="miter" clip-path="url(#cp4)"/><circle cx="1063.01" cy="1132.38" r="6" fill="#ff7043"/></g><g><path d="M1217.10 890.00H1606.70M1217.10 919.67H1606.70M1217.10 949.33H1606.70M1217.10 979.00H1606.70M1217.10 1008.67H1606.70M1217.10 1038.33H1606.70M1217.10 1068.00H1606.70M1217.10 1097.67H1606.70M1217.10 1127.33H1606.70M1217.10 1157.00H1606.70M1217.10 890.00V1157.00M1265.80 890.00V1157.00M1314.50 890.00V1157.00M1363.20 890.00V1157.00M1411.90 890.00V1157.00M1460.60 890.00V1157.00M1509.30 890.00V1157.00M1558.00 890.00V1157.00M1606.70 890.00V1157.00" stroke="#3c3c3c" stroke-opacity=".25" stroke-width="1.3" fill="none"/><path d="M1209.60 890.00H1606.70" stroke="#d9d9d9" stroke-width="1.8" fill="none"/><path d="M1209.60 890.00H1217.10M1209.60 919.67H1217.10M1209.60 949.33H1217.10M1209.60 979.00H1217.10M1209.60 1008.67H1217.10M1209.60 1038.33H1217.10M1209.60 1068.00H1217.10M1209.60 1097.67H1217.10M1209.60 1127.33H1217.10M1209.60 1157.00H1217.10M1217.10 1157.00V1164.50M1265.80 1157.00V1164.50M1314.50 1157.00V1164.50M1363.20 1157.00V1164.50M1411.90 1157.00V1164.50M1460.60 1157.00V1164.50M1509.30 1157.00V1164.50M1558.00 1157.00V1164.50M1606.70 1157.00V1164.50" stroke="#d2d2d2" stroke-width="1.3" fill="none"/><path d="M1209.60 1157.00H1606.70" stroke="#cdcdcd" stroke-width="1.9" fill="none"/><path d="M1217.10 890.00V1157.00" stroke="#999" stroke-width="1.95" fill="none"/><path d="M1217.10 1008.67H1606.70" stroke="#999" stroke-width="1.95" fill="none"/><text x="1201.50" y="955.13" text-anchor="end" font-size="18" fill="#3b3a48">0.200</text><text x="1201.50" y="1014.47" text-anchor="end" font-size="18" fill="#3b3a48">0.00</text><text x="1201.50" y="1073.80" text-anchor="end" font-size="18" fill="#3b3a48">-0.200</text><text x="1201.50" y="1133.13" text-anchor="end" font-size="18" fill="#3b3a48">-0.400</text><text x="1265.80" y="1185.80" text-anchor="middle" font-size="18" fill="#3b3a48">20.00k</text><text x="1363.20" y="1185.80" text-anchor="middle" font-size="18" fill="#3b3a48">60.00k</text><text x="1460.60" y="1185.80" text-anchor="middle" font-size="18" fill="#3b3a48">100.0k</text><text x="1558.00" y="1185.80" text-anchor="middle" font-size="18" fill="#3b3a48">140.0k</text><clipPath id="cp5"><rect x="1217.10" y="890.00" width="389.60" height="267.00"/></clipPath><path d="M1229.27 938.19L1241.45 1034.43L1253.62 927.19L1265.80 1149.37L1277.97 1196.11L1290.15 1112.52L1302.33 1181.26L1314.50 1066.33L1326.67 860.10L1338.85 1099.32L1351.02 1064.13L1363.20 1069.08L1375.38 1004.18L1387.55 1229.66L1399.72 1028.93L1411.90 1028.93L1424.08 1051.92L1436.25 767.27L1448.42 967.23L1460.60 967.89L1472.78 923.89L1484.95 952.05L1497.12 1002.42L1509.30 988.68L1521.47 1017.27L1533.65 1050.93L1545.83 1107.02L1558.00 1187.31L1570.18 1003.63" stroke="#ff7043" stroke-opacity=".22" stroke-width="3" fill="none" clip-path="url(#cp5)"/><path d="M1229.27 938.19L1241.45 976.69L1253.62 956.89L1265.80 1033.88L1277.97 1098.77L1290.15 1104.27L1302.33 1135.07L1314.50 1107.57L1326.67 1008.58L1338.85 1044.88L1351.02 1052.58L1363.20 1059.18L1375.38 1037.18L1387.55 1114.17L1399.72 1080.07L1411.90 1059.62L1424.08 1056.54L1436.25 940.83L1448.42 951.39L1460.60 957.99L1472.78 944.35L1484.95 947.43L1497.12 969.43L1509.30 977.13L1521.47 993.19L1533.65 1016.28L1545.83 1052.58L1558.00 1106.47L1570.18 1065.34" stroke="#ff7043" stroke-width="3" fill="none" stroke-linejoin="miter" clip-path="url(#cp5)"/><circle cx="1570.18" cy="1065.34" r="6" fill="#ff7043"/></g><g><path d="M1727.10 890.00H2116.70M1727.10 919.67H2116.70M1727.10 949.33H2116.70M1727.10 979.00H2116.70M1727.10 1008.67H2116.70M1727.10 1038.33H2116.70M1727.10 1068.00H2116.70M1727.10 1097.67H2116.70M1727.10 1127.33H2116.70M1727.10 1157.00H2116.70M1727.10 890.00V1157.00M1775.80 890.00V1157.00M1824.50 890.00V1157.00M1873.20 890.00V1157.00M1921.90 890.00V1157.00M1970.60 890.00V1157.00M2019.30 890.00V1157.00M2068.00 890.00V1157.00M2116.70 890.00V1157.00" stroke="#3c3c3c" stroke-opacity=".25" stroke-width="1.3" fill="none"/><path d="M1719.60 890.00H2116.70" stroke="#d9d9d9" stroke-width="1.8" fill="none"/><path d="M1719.60 890.00H1727.10M1719.60 919.67H1727.10M1719.60 949.33H1727.10M1719.60 979.00H1727.10M1719.60 1008.67H1727.10M1719.60 1038.33H1727.10M1719.60 1068.00H1727.10M1719.60 1097.67H1727.10M1719.60 1127.33H1727.10M1719.60 1157.00H1727.10M1727.10 1157.00V1164.50M1775.80 1157.00V1164.50M1824.50 1157.00V1164.50M1873.20 1157.00V1164.50M1921.90 1157.00V1164.50M1970.60 1157.00V1164.50M2019.30 1157.00V1164.50M2068.00 1157.00V1164.50M2116.70 1157.00V1164.50" stroke="#d2d2d2" stroke-width="1.3" fill="none"/><path d="M1719.60 1157.00H2116.70" stroke="#cdcdcd" stroke-width="1.9" fill="none"/><path d="M1727.10 890.00V1157.00" stroke="#999" stroke-width="1.95" fill="none"/><path d="M1727.10 1127.33H2116.70" stroke="#999" stroke-width="1.95" fill="none"/><text x="1711.50" y="955.13" text-anchor="end" font-size="18" fill="#3b3a48">3.00</text><text x="1711.50" y="1014.47" text-anchor="end" font-size="18" fill="#3b3a48">2.00</text><text x="1711.50" y="1073.80" text-anchor="end" font-size="18" fill="#3b3a48">1.00</text><text x="1711.50" y="1133.13" text-anchor="end" font-size="18" fill="#3b3a48">0.00</text><text x="1775.80" y="1185.80" text-anchor="middle" font-size="18" fill="#3b3a48">20.00k</text><text x="1873.20" y="1185.80" text-anchor="middle" font-size="18" fill="#3b3a48">60.00k</text><text x="1970.60" y="1185.80" text-anchor="middle" font-size="18" fill="#3b3a48">100.0k</text><text x="2068.00" y="1185.80" text-anchor="middle" font-size="18" fill="#3b3a48">140.0k</text><clipPath id="cp6"><rect x="1727.10" y="890.00" width="389.60" height="267.00"/></clipPath><path d="M1739.27 1100.53L1751.45 1113.73L1763.62 1108.01L1775.80 1084.14L1787.97 1070.18L1800.15 1037.18L1812.32 1026.73L1824.50 1037.07L1836.67 1002.97L1848.85 984.39L1861.02 976.14L1873.20 980.98L1885.37 998.79L1897.55 957.55L1909.72 986.48L1921.90 964.59L1934.07 946.00L1946.25 934.34L1958.42 969.98L1970.60 940.94L1982.77 938.08L1994.95 941.38L2007.12 933.35L2019.30 933.90L2031.47 938.63L2043.65 924.22L2055.82 936.87L2068.00 935.33L2080.17 936.87" stroke="#ff7043" stroke-opacity=".22" stroke-width="3" fill="none" clip-path="url(#cp6)"/><path d="M1739.27 1100.53L1751.45 1105.81L1763.62 1106.69L1775.80 1097.67L1787.97 1086.67L1800.15 1066.88L1812.32 1050.82L1824.50 1045.32L1836.67 1028.38L1848.85 1010.78L1861.02 996.92L1873.20 990.55L1885.37 993.85L1897.55 979.33L1909.72 982.19L1921.90 975.15L1934.07 963.49L1946.25 951.83L1958.42 959.09L1970.60 951.83L1982.77 946.33L1994.95 944.35L2007.12 939.95L2019.30 937.53L2031.47 937.97L2043.65 932.47L2055.82 934.23L2068.00 934.67L2080.17 935.55" stroke="#ff7043" stroke-width="3" fill="none" stroke-linejoin="miter" clip-path="url(#cp6)"/><circle cx="2080.17" cy="935.55" r="6" fill="#ff7043"/></g><g><path d="M2252.10 890.00H2626.70M2252.10 912.25H2626.70M2252.10 934.50H2626.70M2252.10 956.75H2626.70M2252.10 979.00H2626.70M2252.10 1001.25H2626.70M2252.10 1023.50H2626.70M2252.10 1045.75H2626.70M2252.10 1068.00H2626.70M2252.10 1090.25H2626.70M2252.10 1112.50H2626.70M2252.10 1134.75H2626.70M2252.10 1157.00H2626.70M2252.10 890.00V1157.00M2298.92 890.00V1157.00M2345.75 890.00V1157.00M2392.57 890.00V1157.00M2439.40 890.00V1157.00M2486.22 890.00V1157.00M2533.05 890.00V1157.00M2579.88 890.00V1157.00M2626.70 890.00V1157.00" stroke="#3c3c3c" stroke-opacity=".25" stroke-width="1.3" fill="none"/><path d="M2244.60 890.00H2626.70" stroke="#d9d9d9" stroke-width="1.8" fill="none"/><path d="M2244.60 890.00H2252.10M2244.60 912.25H2252.10M2244.60 934.50H2252.10M2244.60 956.75H2252.10M2244.60 979.00H2252.10M2244.60 1001.25H2252.10M2244.60 1023.50H2252.10M2244.60 1045.75H2252.10M2244.60 1068.00H2252.10M2244.60 1090.25H2252.10M2244.60 1112.50H2252.10M2244.60 1134.75H2252.10M2244.60 1157.00H2252.10M2252.10 1157.00V1164.50M2298.92 1157.00V1164.50M2345.75 1157.00V1164.50M2392.57 1157.00V1164.50M2439.40 1157.00V1164.50M2486.22 1157.00V1164.50M2533.05 1157.00V1164.50M2579.88 1157.00V1164.50M2626.70 1157.00V1164.50" stroke="#d2d2d2" stroke-width="1.3" fill="none"/><path d="M2244.60 1157.00H2626.70" stroke="#cdcdcd" stroke-width="1.9" fill="none"/><path d="M2252.10 890.00V1157.00" stroke="#999" stroke-width="1.95" fill="none"/><path d="M2252.10 1134.75H2626.70" stroke="#999" stroke-width="1.95" fill="none"/><text x="2236.50" y="918.05" text-anchor="end" font-size="18" fill="#3b3a48">1.00e+3</text><text x="2236.50" y="962.55" text-anchor="end" font-size="18" fill="#3b3a48">800</text><text x="2236.50" y="1007.05" text-anchor="end" font-size="18" fill="#3b3a48">600</text><text x="2236.50" y="1051.55" text-anchor="end" font-size="18" fill="#3b3a48">400</text><text x="2236.50" y="1096.05" text-anchor="end" font-size="18" fill="#3b3a48">200</text><text x="2236.50" y="1140.55" text-anchor="end" font-size="18" fill="#3b3a48">0.00</text><text x="2298.92" y="1185.80" text-anchor="middle" font-size="18" fill="#3b3a48">20.00k</text><text x="2392.57" y="1185.80" text-anchor="middle" font-size="18" fill="#3b3a48">60.00k</text><text x="2486.22" y="1185.80" text-anchor="middle" font-size="18" fill="#3b3a48">100.0k</text><text x="2579.88" y="1185.80" text-anchor="middle" font-size="18" fill="#3b3a48">140.0k</text><clipPath id="cp7"><rect x="2252.10" y="890.00" width="374.60" height="267.00"/></clipPath><path d="M2263.81 907.84L2275.51 1043.12L2287.22 948.20L2298.92 952.05L2310.63 973.94L2322.34 931.04L2334.04 938.85L2345.75 916.30L2357.46 921.69L2369.16 996.04L2380.87 931.04L2392.57 982.74L2404.28 972.18L2415.99 1008.69L2427.69 956.78L2439.40 946.44L2451.11 998.79L2462.81 1020.68L2474.52 1047.63L2486.22 1036.52L2497.93 919.49L2509.64 1001.43L2521.34 1010.23L2533.05 1051.92L2544.76 1063.58L2556.46 1037.18L2568.17 1059.18L2579.88 968.99L2591.58 1074.58" stroke="#ff7043" stroke-opacity=".22" stroke-width="3" fill="none" clip-path="url(#cp7)"/><path d="M2263.81 907.84L2275.51 961.95L2287.22 956.45L2298.92 954.69L2310.63 962.39L2322.34 949.85L2334.04 945.45L2345.75 933.79L2357.46 928.95L2369.16 955.79L2380.87 945.89L2392.57 960.63L2404.28 965.25L2415.99 982.63L2427.69 972.29L2439.40 961.95L2451.11 976.69L2462.81 994.29L2474.52 1015.62L2486.22 1023.98L2497.93 982.19L2509.64 989.89L2521.34 998.02L2533.05 1019.58L2544.76 1037.18L2556.46 1037.18L2568.17 1045.98L2579.88 1015.18L2591.58 1038.94" stroke="#ff7043" stroke-width="3" fill="none" stroke-linejoin="miter" clip-path="url(#cp7)"/><circle cx="2591.58" cy="1038.94" r="6" fill="#ff7043"/></g></svg>
<div class="b" style="left:2685.00px;top:260.00px;width:15.00px;height:1021.00px;background:#9e9e9e;border-radius:7.5px;z-index:7;"></div>
</main>
</body></html>
